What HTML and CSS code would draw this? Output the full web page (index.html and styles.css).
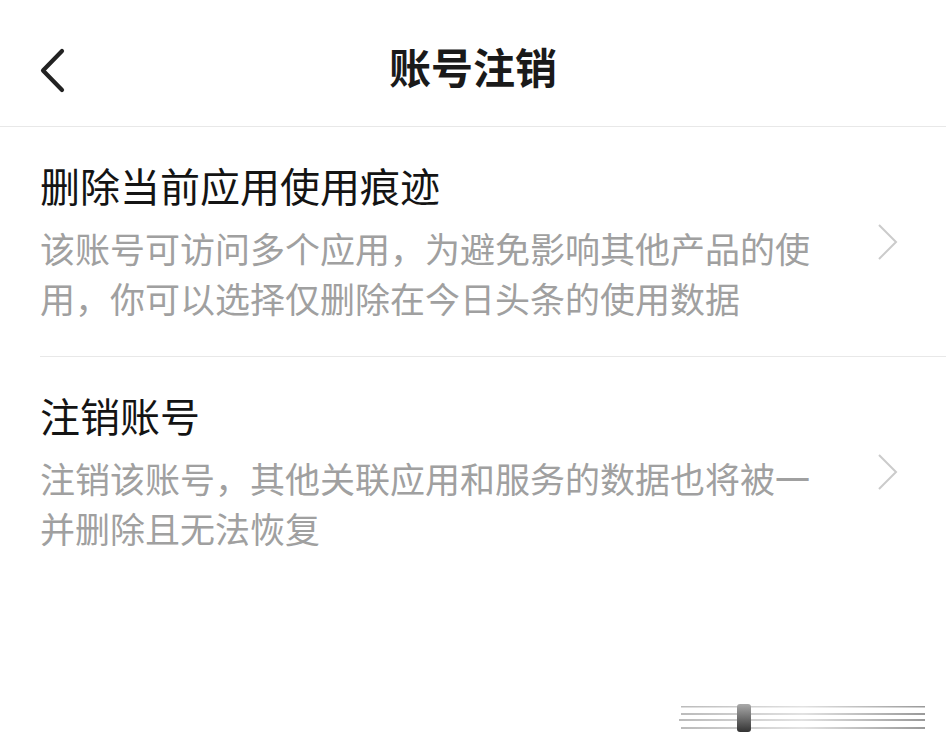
FILE: index.html
```html
<!DOCTYPE html>
<html lang="zh-CN">
<head>
<meta charset="utf-8">
<title>账号注销</title>
<link rel="stylesheet" href="styles.css">
</head>
<body>
<div class="page">
  <header class="topbar">
    <div class="back">
      <svg width="30" height="46" viewBox="0 0 30 46"><polyline points="22,3 3,22.5 22,42" fill="none" stroke="#222" stroke-width="4.2" stroke-linecap="round" stroke-linejoin="round"/></svg>
    </div>
    <h1 class="title">账号注销</h1>
    <div class="spacer"></div>
  </header>
  <div class="list">
    <div class="item">
      <div class="text">
        <div class="item-title">删除当前应用使用痕迹</div>
        <div class="item-desc">该账号可访问多个应用，为避免影响其他产品的使用，你可以选择仅删除在今日头条的使用数据</div>
      </div>
      <svg class="chev" width="24" height="38" viewBox="0 0 24 38"><polyline points="3,2 20,19 3,36" fill="none" stroke="#cbcbcb" stroke-width="2"/></svg>
    </div>
    <div class="item last">
      <div class="text">
        <div class="item-title">注销账号</div>
        <div class="item-desc">注销该账号，其他关联应用和服务的数据也将被一并删除且无法恢复</div>
      </div>
      <svg class="chev" width="24" height="38" viewBox="0 0 24 38"><polyline points="3,2 20,19 3,36" fill="none" stroke="#cbcbcb" stroke-width="2"/></svg>
    </div>
  </div>
  <svg class="mark" width="250" height="34" viewBox="0 0 250 34">
    <defs>
      <linearGradient id="g" x1="0" x2="1" y1="0" y2="0">
        <stop offset="0" stop-color="#bbb"/>
        <stop offset="0.5" stop-color="#e2e2e2"/>
        <stop offset="1" stop-color="#999"/>
      </linearGradient>
      <linearGradient id="b" x1="0" x2="0" y1="0" y2="1">
        <stop offset="0" stop-color="#aaa"/>
        <stop offset="1" stop-color="#333"/>
      </linearGradient>
    </defs>
    <rect x="2" y="5" width="244" height="1.5" fill="url(#g)"/>
    <rect x="2" y="12" width="244" height="2" fill="url(#g)"/>
    <rect x="0" y="18" width="246" height="2" fill="url(#g)"/>
    <rect x="2" y="26" width="244" height="2" fill="url(#g)"/>
    <rect x="58" y="3" width="14" height="28" rx="3" fill="url(#b)"/>
  </svg>
</div>
</body>
</html>
```

FILE: styles.css
```css
html, body {
  margin: 0;
  padding: 0;
  background: #ffffff;
}
body {
  font-family: "Noto Sans CJK SC", "Noto Sans", sans-serif;
  color: #1a1a1a;
}
.page {
  width: 946px;
  height: 752px;
  position: relative;
  overflow: hidden;
}
.topbar {
  box-sizing: border-box;
  height: 127px;
  padding-top: 6px;
  border-bottom: 1px solid #e8e8e8;
  display: grid;
  grid-template-columns: 1fr auto 1fr;
  align-items: center;
}
.back {
  padding-left: 40px;
  display: flex;
  align-items: center;
  margin-top: 10px;
}
.title {
  margin: 0;
  font-size: 42px;
  font-weight: 700;
  line-height: 60px;
  color: #1a1a1a;
  letter-spacing: 0;
}
.item {
  margin-left: 40px;
  padding: 33px 46px 33px 0;
  border-bottom: 1px solid #e8e8e8;
  display: flex;
  align-items: center;
}
.item.last {
  border-bottom: none;
}
.text {
  width: 790px;
}
.item-title {
  font-size: 40px;
  line-height: 50px;
  color: #141414;
}
.item-desc {
  margin-top: 13px;
  font-size: 35px;
  line-height: 50px;
  color: #a0a0a0;
}
.chev {
  margin-left: 46px;
  flex: none;
}
.mark {
  position: absolute;
  left: 679px;
  top: 701px;
}
```
